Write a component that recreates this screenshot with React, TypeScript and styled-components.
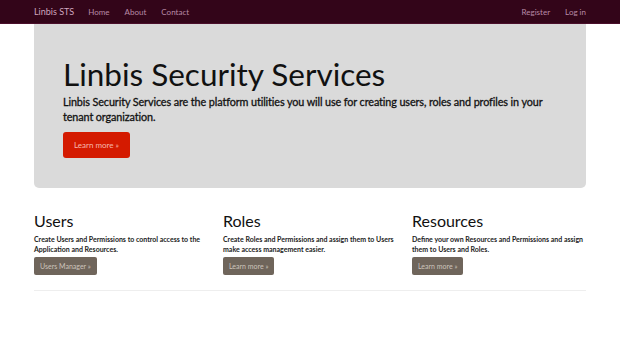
import styled, { createGlobalStyle } from "styled-components";

const Global = createGlobalStyle`
  body {
    margin: 0;
    background: #fff;
    font-family: Lato, "Open Sans", sans-serif;
    color: #111;
  }
`;

export default function App() {
  return (
    <>
      <Global />
      <Navbar>
        <Container>
          <NavGroup>
            <Brand>Linbis STS</Brand>
            <NavLink>Home</NavLink>
            <NavLink>About</NavLink>
            <NavLink>Contact</NavLink>
          </NavGroup>
          <NavGroup>
            <NavLink>Register</NavLink>
            <NavLink>Log in</NavLink>
          </NavGroup>
        </Container>
      </Navbar>
      <Container>
        <Jumbotron>
          <Title>Linbis Security Services</Title>
          <Lead>
            Linbis Security Services are the platform utilities you will use for
            creating users, roles and profiles in your tenant organization.
          </Lead>
          <PrimaryButton>Learn more »</PrimaryButton>
        </Jumbotron>
        <Columns>
          <Column>
            <ColTitle>Users</ColTitle>
            <ColText>
              Create Users and Permissions to control access to the Application
              and Resources.
            </ColText>
            <DefaultButton>Users Manager »</DefaultButton>
          </Column>
          <Column>
            <ColTitle>Roles</ColTitle>
            <ColText>
              Create Roles and Permissions and assign them to Users make access
              management easier.
            </ColText>
            <DefaultButton>Learn more »</DefaultButton>
          </Column>
          <Column>
            <ColTitle>Resources</ColTitle>
            <ColText>
              Define your own Resources and Permissions and assign them to Users
              and Roles.
            </ColText>
            <DefaultButton>Learn more »</DefaultButton>
          </Column>
        </Columns>
        <Rule />
      </Container>
    </>
  );
}

const Container = styled.div`
  width: 552px;
  margin: 0 auto;
`;

const Navbar = styled.nav`
  height: 24px;
  background: #330519;
  border-bottom: 1px solid #4a0f2b;
  box-sizing: border-box;

  & > div {
    display: flex;
    align-items: center;
    justify-content: space-between;
    height: 100%;
  }
`;

const NavGroup = styled.div`
  display: flex;
  align-items: center;
  gap: 15px;
`;

const Brand = styled.span`
  font-size: 9px;
  color: #cfa6bf;
  margin-right: -1px;
`;

const NavLink = styled.span`
  font-size: 8px;
  color: #b98aa6;
`;

const Jumbotron = styled.div`
  background: #dadada;
  border-radius: 0 0 5px 5px;
  padding: 32px 29px 30px;
`;

const Title = styled.h1`
  margin: 0;
  font-size: 31.5px;
  font-weight: 400;
  line-height: 36px;
  color: #111;
`;

const Lead = styled.p`
  margin: 2px 0 8px;
  font-size: 10.8px;
  line-height: 15px;
  font-weight: 400;
  color: #111;
  -webkit-text-stroke: 0.3px #111;
  letter-spacing: -0.1px;
  max-width: 484px;
`;

const PrimaryButton = styled.button`
  display: block;
  width: 67px;
  height: 26px;
  padding: 0;
  border: none;
  border-radius: 3px;
  background: #d41a00;
  color: #f6b8ad;
  font-family: inherit;
  font-size: 8px;
`;

const Columns = styled.div`
  display: grid;
  grid-template-columns: repeat(3, 1fr);
  gap: 15px;
  margin-top: 24px;
`;

const Column = styled.div`
  display: flex;
  flex-direction: column;
  align-items: flex-start;
`;

const ColTitle = styled.h2`
  margin: 0;
  font-size: 16px;
  font-weight: 400;
  line-height: 18px;
  color: #111;
`;

const ColText = styled.p`
  margin: 4px 0 3px;
  font-size: 7px;
  line-height: 10px;
  font-weight: 700;
  color: #222;
`;

const DefaultButton = styled.button`
  height: 18px;
  padding: 0 6px;
  border: none;
  border-radius: 2px;
  background: #6f655b;
  color: #cdc4bb;
  font-family: inherit;
  font-size: 7px;
`;

const Rule = styled.hr`
  margin: 15px 0 0;
  border: none;
  border-top: 1px solid #eeeeee;
`;
